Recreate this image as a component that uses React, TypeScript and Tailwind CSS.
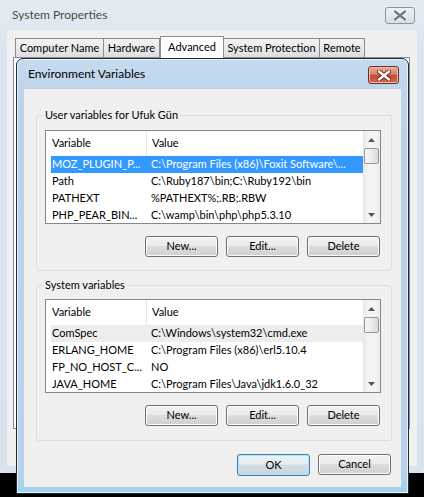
import type { ReactNode } from 'react'

const userVars = [
  ['MOZ_PLUGIN_P...', 'C:\\Program Files (x86)\\Foxit Software\\...'],
  ['Path', 'C:\\Ruby187\\bin;C:\\Ruby192\\bin'],
  ['PATHEXT', '%PATHEXT%;.RB;.RBW'],
  ['PHP_PEAR_BIN...', 'C:\\wamp\\bin\\php\\php5.3.10'],
]

const systemVars = [
  ['ComSpec', 'C:\\Windows\\system32\\cmd.exe'],
  ['ERLANG_HOME', 'C:\\Program Files (x86)\\erl5.10.4'],
  ['FP_NO_HOST_C...', 'NO'],
  ['JAVA_HOME', 'C:\\Program Files\\Java\\jdk1.6.0_32'],
]

function WinButton({ children, primary }: { children: ReactNode; primary?: boolean }) {
  return (
    <button
      className={
        primary
          ? 'flex h-[22px] w-[73px] items-center justify-center rounded-[3px] border border-[#3c7fb1] bg-[linear-gradient(#eef3f7,#e6ecf1_45%,#d3dee6_50%,#c7d4de)] text-[11px] text-black shadow-[inset_0_0_0_1px_#b8e2f8]'
          : 'flex h-[21px] w-[73px] items-center justify-center rounded-[3px] border border-[#707070] bg-[linear-gradient(#f2f2f2,#ebebeb_45%,#dddddd_50%,#cfcfcf)] text-[11px] text-black shadow-[inset_0_0_0_1px_#fcfcfc]'
      }
    >
      {children}
    </button>
  )
}

function ScrollBar() {
  return (
    <div className="flex w-[17px] flex-col bg-[linear-gradient(90deg,#e6e6e6,#f4f4f4_30%,#f4f4f4_70%,#ececec)]">
      <div className="flex h-[17px] items-center justify-center">
        <svg width="7" height="4" viewBox="0 0 7 4">
          <path d="M0 4 L3.5 0 L7 4 Z" fill="#555" />
        </svg>
      </div>
      <div className="mx-[1px] h-[16px] rounded-[2px] border border-[#979797] bg-[linear-gradient(90deg,#f5f5f5,#ececec_50%,#d8d8d8)]" />
      <div className="flex-1" />
      <div className="flex h-[17px] items-center justify-center">
        <svg width="7" height="4" viewBox="0 0 7 4">
          <path d="M0 0 L3.5 4 L7 0 Z" fill="#555" />
        </svg>
      </div>
    </div>
  )
}

function VarList({ rows, selected }: { rows: string[][]; selected: 'focus' | 'blur' }) {
  return (
    <div className="flex h-[94px] w-[336px] overflow-hidden border border-[#828790] bg-white">
      <div className="flex w-[317px] flex-col overflow-hidden">
        <div className="flex h-[25px] shrink-0 items-center">
          <div className="w-[100px] pl-[6px]">Variable</div>
          <div className="h-full w-px bg-[#e5e5e5]" />
          <div className="pl-[5px]">Value</div>
        </div>
        <div className="ml-[5px] flex w-[312px] flex-col">
          {rows.map(([name, value], i) => (
            <div
              key={name}
              className={
                i === 0
                  ? selected === 'focus'
                    ? 'flex h-[17px] shrink-0 items-center bg-[#3399ff] text-white'
                    : 'flex h-[17px] shrink-0 items-center bg-[#ededed]'
                  : 'flex h-[17px] shrink-0 items-center'
              }
            >
              <div className="w-[100px] whitespace-nowrap pl-[1px]">{name}</div>
              <div className="whitespace-nowrap">{value}</div>
            </div>
          ))}
        </div>
      </div>
      <ScrollBar />
    </div>
  )
}

function GroupBox({ label, children, className }: { label: string; children: ReactNode; className: string }) {
  return (
    <div className={`relative ml-[12px] w-[356px] rounded-[3px] border border-[#d9dfe3] ${className}`}>
      <span className="absolute -top-[9px] left-[6px] bg-[#f0f0f0] px-[2px] leading-[16px]">{label}</span>
      {children}
    </div>
  )
}

function CloseX({ color }: { color: string }) {
  return (
    <svg width="14" height="11" viewBox="0 0 14 11">
      <path d="M2 1.5 L12 9.5 M12 1.5 L2 9.5" stroke={color === 'white' ? '#6b1e12' : '#ffffff'} strokeWidth="4.2" strokeLinecap="round" />
      <path d="M2 1.5 L12 9.5 M12 1.5 L2 9.5" stroke={color === 'white' ? '#ffffff' : '#6f7b88'} strokeWidth="2.4" strokeLinecap="round" />
    </svg>
  )
}

function SystemProperties() {
  const tabs = [
    { label: 'Computer Name', w: 'w-[89px]' },
    { label: 'Hardware', w: 'w-[57px] -ml-px' },
    { label: 'Advanced', w: 'w-[64px]', active: true },
    { label: 'System Protection', w: 'w-[97px] -ml-px' },
    { label: 'Remote', w: 'w-[46px] -ml-px' },
  ]
  return (
    <div className="flex h-[473px] w-[424px] flex-col bg-[linear-gradient(#e3eaf2,#dbe4ee_60px,#d9e3ed)]">
      <div className="flex h-[30px] shrink-0 items-center justify-between pl-[12px] pr-[9px]">
        <span className="text-[12px] text-[#4a4a4a]">System Properties</span>
        <div className="flex h-[17px] w-[30px] items-center justify-center rounded-[3px] border border-[#8e98a4] bg-[linear-gradient(#eef2f6,#e1e7ee_50%,#d6dee7)]">
          <CloseX color="gray" />
        </div>
      </div>
      <div className="mx-[7px] mb-[7px] flex flex-1 flex-col bg-[#f0f0f0] pt-[6px]">
        <div className="ml-[8px] flex h-[21px] items-end">
          {tabs.map((t) =>
            t.active ? (
              <div
                key={t.label}
                className={`relative z-10 -mb-px flex h-[22px] items-start justify-center border border-b-0 border-[#898c95] bg-white pt-[2px] ${t.w}`}
              >
                {t.label}
              </div>
            ) : (
              <div
                key={t.label}
                className={`flex h-[19px] items-center justify-center border border-b-0 border-[#898c95] bg-[linear-gradient(#f2f2f2,#ebebeb_50%,#dddddd)] ${t.w}`}
              >
                {t.label}
              </div>
            ),
          )}
        </div>
        <div className="ml-[6px] mr-[7px] h-[372px] border border-[#898c95] bg-white" />
      </div>
    </div>
  )
}

function EnvironmentVariables() {
  return (
    <div className="absolute left-[16px] top-[58px] flex h-[436px] w-[393px] flex-col rounded-t-[7px] border border-[#1f2b38] bg-[linear-gradient(#c6dbef,#bcd3ea_40px,#b9d1ea_95%,#9fd3ea)] shadow-[inset_0_0_0_1px_#e8f1fa]">
      <div className="flex h-[30px] shrink-0 items-center justify-between pl-[11px] pr-[9px]">
        <span className="text-[12px] text-black">Environment Variables</span>
        <div className="mt-[2px] flex h-[18px] w-[31px] items-center justify-center rounded-[3px] border border-[#6e2e24] bg-[linear-gradient(#e9a99c,#d98672_45%,#c8472f_50%,#d26a52)] shadow-[inset_0_0_0_1px_#efb9ad]">
          <CloseX color="white" />
        </div>
      </div>
      <div className="mx-[7px] flex h-[398px] flex-col bg-[#f0f0f0]">
        <GroupBox label="User variables for Ufuk Gün" className="mt-[26px] h-[156px] pl-[8px] pt-[14px]">
          <VarList rows={userVars} selected="focus" />
          <div className="mt-[12px] flex w-[336px] justify-end gap-[8px] pr-px">
            <WinButton>New...</WinButton>
            <WinButton>Edit...</WinButton>
            <WinButton>Delete</WinButton>
          </div>
        </GroupBox>
        <GroupBox label="System variables" className="mt-[14px] h-[156px] pl-[8px] pt-[13px]">
          <VarList rows={systemVars} selected="blur" />
          <div className="mt-[12px] flex w-[336px] justify-end gap-[8px] pr-px">
            <WinButton>New...</WinButton>
            <WinButton>Edit...</WinButton>
            <WinButton>Delete</WinButton>
          </div>
        </GroupBox>
        <div className="mt-[13px] flex justify-end gap-[8px] pr-[10px]">
          <WinButton primary>OK</WinButton>
          <WinButton>Cancel</WinButton>
        </div>
      </div>
    </div>
  )
}

export default function App() {
  return (
    <div className="relative h-[497px] w-[424px] overflow-hidden bg-black font-['Lato',sans-serif] text-[11px] text-black">
      <SystemProperties />
      <EnvironmentVariables />
    </div>
  )
}
